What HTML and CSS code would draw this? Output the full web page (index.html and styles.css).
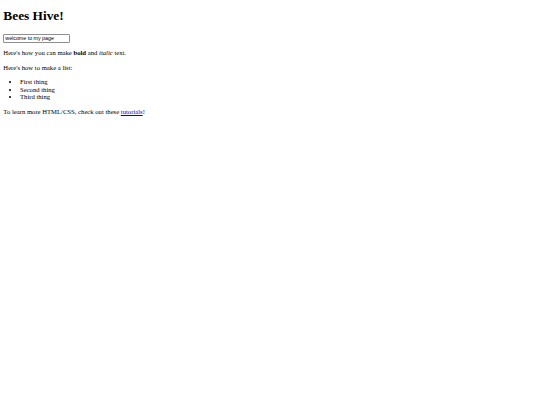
FILE: index.html
```html
<!DOCTYPE html>
<html>
<head>
<meta charset="utf-8">
<title>Bees Hive!</title>
<link rel="stylesheet" href="styles.css">
</head>
<body class="page">
<h1 class="title">Bees Hive!</h1>
<input class="field" type="text" value="welcome to my page">
<p class="text">Here's how you can make <b>bold</b> and <i>italic</i> text.</p>
<p class="text">Here's how to make a list:</p>
<ul class="list">
<li>First thing</li>
<li>Second thing</li>
<li>Third thing</li>
</ul>
<p class="text">To learn more HTML/CSS, check out these <a class="link" href="#">tutorials</a>!</p>
</body>
</html>
```
FILE: styles.css
```css
html { background: #fff; }
.page {
  margin: 3.33px;
  font-family: "Liberation Serif", "Times New Roman", serif;
  font-size: 6.667px;
  line-height: 7.67px;
  color: #000;
}
.title {
  font-size: 13.333px;
  line-height: 15.33px;
  margin: 5.1px 0 9.93px;
  font-weight: bold;
}
.field {
  box-sizing: border-box;
  font-family: "Liberation Sans", Arial, sans-serif;
  font-size: 5.3px;
  line-height: 6px;
  width: 67px;
  height: 9px;
  padding: 0 1px;
  border: 1px solid #8f8f8f;
  border-radius: 1px;
  margin: 0;
  color: #000;
  background: #fff;
}
.text { margin: 6.67px 0; }
.list { margin: 6.67px 0; padding-left: 16.67px; }
.link { color: #0000ee; }
```
